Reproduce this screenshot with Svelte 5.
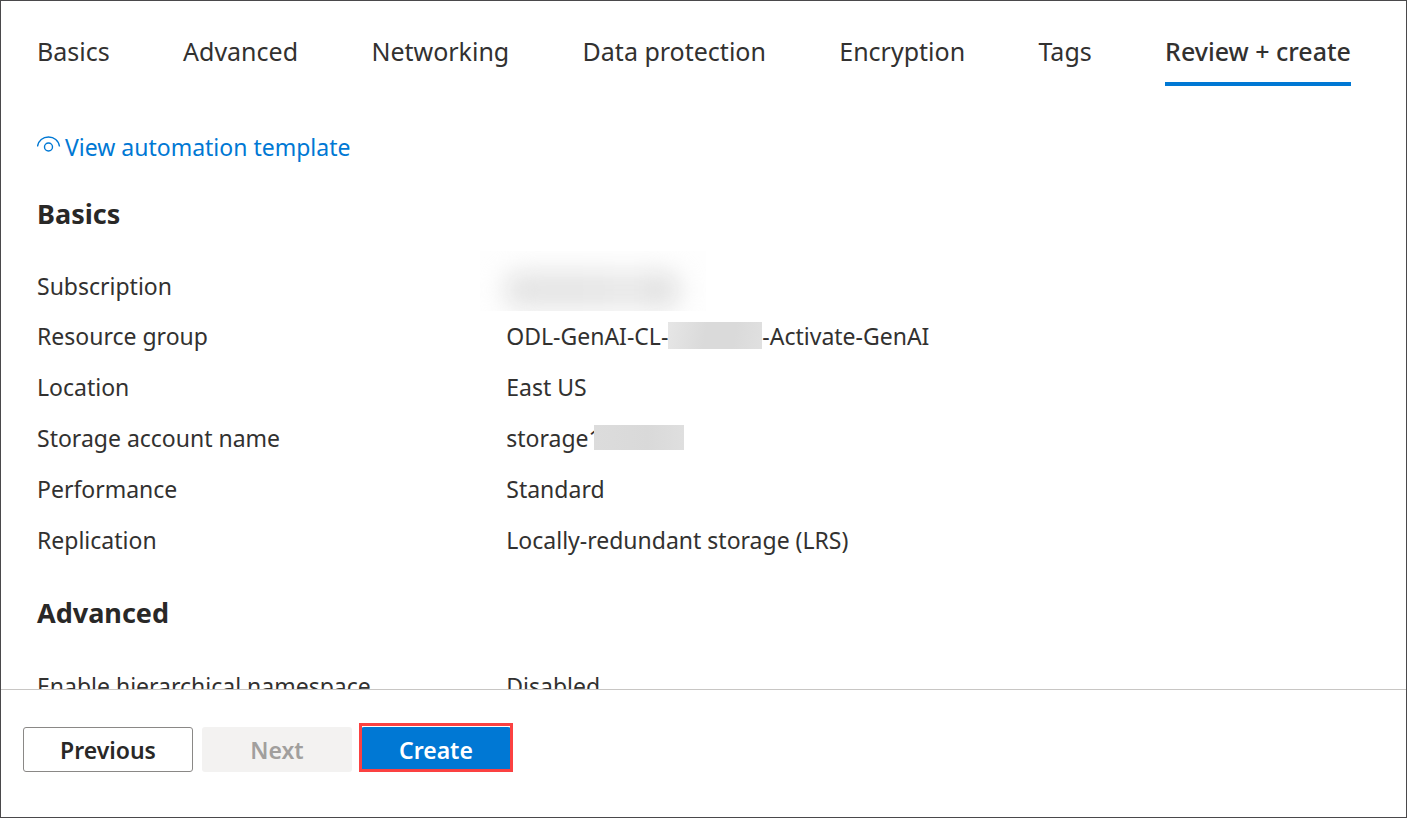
<script>
  const tabs = ['Basics', 'Advanced', 'Networking', 'Data protection', 'Encryption', 'Tags', 'Review + create'];
  let active = $state('Review + create');
</script>

<div class="blade">
  <nav class="tabs" role="tablist" aria-label="Create a storage account">
    {#each tabs as tab}
      <button class="tab" class:active={tab === active} role="tab" aria-selected={tab === active} onclick={() => (active = tab)}>{tab}</button>
    {/each}
  </nav>

  <main class="content">
    <a class="template-link" href="#template">
      <svg width="24" height="22" viewBox="0 0 24 22" fill="none" stroke="currentColor" stroke-width="1.4" aria-hidden="true">
        <path d="M0.500 11.500C1.300 5.300 6 2 11.500 2S21.700 5.300 22.500 11.500" />
        <circle cx="11.500" cy="12" r="4" />
      </svg>
      <span>View automation template</span>
    </a>

    <section>
      <h2>Basics</h2>
      <dl>
        <div class="row concealed"><dt>Subscription</dt><dd><span class="smudge"></span></dd></div>
        <div class="row"><dt>Resource group</dt><dd>ODL-GenAI-CL-<span class="mask group"></span>-Activate-GenAI</dd></div>
        <div class="row"><dt>Location</dt><dd>East US</dd></div>
        <div class="row"><dt>Storage account name</dt><dd>storage<span class="cut">1</span><span class="mask account"></span></dd></div>
        <div class="row"><dt>Performance</dt><dd>Standard</dd></div>
        <div class="row"><dt>Replication</dt><dd>Locally-redundant storage (LRS)</dd></div>
      </dl>
    </section>

    <section>
      <h2>Advanced</h2>
      <dl>
        <div class="row"><dt>Enable hierarchical namespace</dt><dd>Disabled</dd></div>
      </dl>
    </section>
  </main>

  <footer class="actions">
    <button class="btn previous">Previous</button>
    <button class="btn next" disabled>Next</button>
    <button class="btn create">Create</button>
  </footer>
</div>

<style>
  :global(body) {
    margin: 0;
    background: #fff;
  }

  .blade {
    box-sizing: border-box;
    height: 100vh;
    display: flex;
    flex-direction: column;
    border: 1px solid #4a494b;
    overflow: hidden;
    color: #323130;
    font-family: "Segoe UI", "Noto Sans", sans-serif;
    font-size: 23px;
    line-height: 32px;
  }

  .tabs {
    flex: none;
    display: flex;
    justify-content: space-between;
    padding: 34px 55px 0 36px;
  }

  .tab {
    padding: 0 0 15px;
    border: 0;
    border-bottom: 4px solid transparent;
    background: none;
    color: inherit;
    font: inherit;
    font-size: 25px;
    white-space: nowrap;
    cursor: pointer;
  }

  .tab.active {
    border-bottom-color: #0078d4;
    font-weight: 500;
  }

  .content {
    flex: 1;
    min-height: 0;
    padding: 45px 55px 0 36px;
    overflow: hidden;
  }

  .template-link {
    display: flex;
    width: fit-content;
    align-items: center;
    gap: 4px;
    color: #0078d4;
    text-decoration: none;
  }

  .template-link svg {
    margin-bottom: 2px;
  }

  h2 {
    margin: 35px 0 31px;
    color: #292827;
    font-size: 27px;
    font-weight: 700;
    line-height: 32px;
  }

  section + section h2 {
    margin-top: 32px;
  }

  dl {
    margin: 0;
  }

  .row {
    display: grid;
    grid-template-columns: 5fr 9fr;
    height: 51px;
    align-items: center;
  }

  .row.concealed {
    height: 49px;
  }

  dt,
  dd {
    margin: 0;
    white-space: nowrap;
  }

  dd {
    display: flex;
    align-items: center;
  }

  .smudge {
    flex: none;
    width: 226px;
    height: 60px;
    margin: -10px 0 0 -26px;
    background: #fefefe;
    overflow: hidden;
  }

  .concealed dd {
    height: 49px;
  }

  .smudge::before {
    content: "";
    display: block;
    width: 176px;
    height: 38px;
    margin: 20px 0 0 24px;
    border-radius: 16px;
    background: linear-gradient(90deg, #e4e4e4, #e6e6e6 60%, #ebebeb 70%, #e2e2e2 85%);
    filter: blur(12px);
  }

  .mask {
    flex: none;
  }

  .group {
    width: 94px;
    height: 27px;
    background: linear-gradient(100deg, #e6e6e6, #dadada 40%, #dadada 70%, #e0e0e0);
  }

  .account {
    width: 90px;
    height: 25px;
    background: linear-gradient(90deg, #dcdcdc, #d9d9d9 60%, #dfdfdf);
  }

  .cut {
    width: 5px;
    overflow: hidden;
  }

  .actions {
    flex: none;
    display: flex;
    gap: 9px;
    padding: 37px 22px 45px;
    border-top: 1px solid #c8c6c4;
    background: #fff;
  }

  .btn {
    box-sizing: border-box;
    height: 45px;
    min-width: 150px;
    padding: 0 36px;
    border: 1px solid transparent;
    border-radius: 3px;
    font: inherit;
    font-weight: 600;
    cursor: pointer;
  }

  .previous {
    border-color: #8a8886;
    background: #fff;
    color: #292827;
  }

  .next {
    background: #f3f2f1;
    color: #a19f9d;
    cursor: default;
  }

  .create {
    position: relative;
    background: #0078d4;
    color: #fff;
  }

  .create::after {
    content: "";
    position: absolute;
    inset: -5px -3px -1px;
    border: 3px solid #fb4141;
  }
</style>
